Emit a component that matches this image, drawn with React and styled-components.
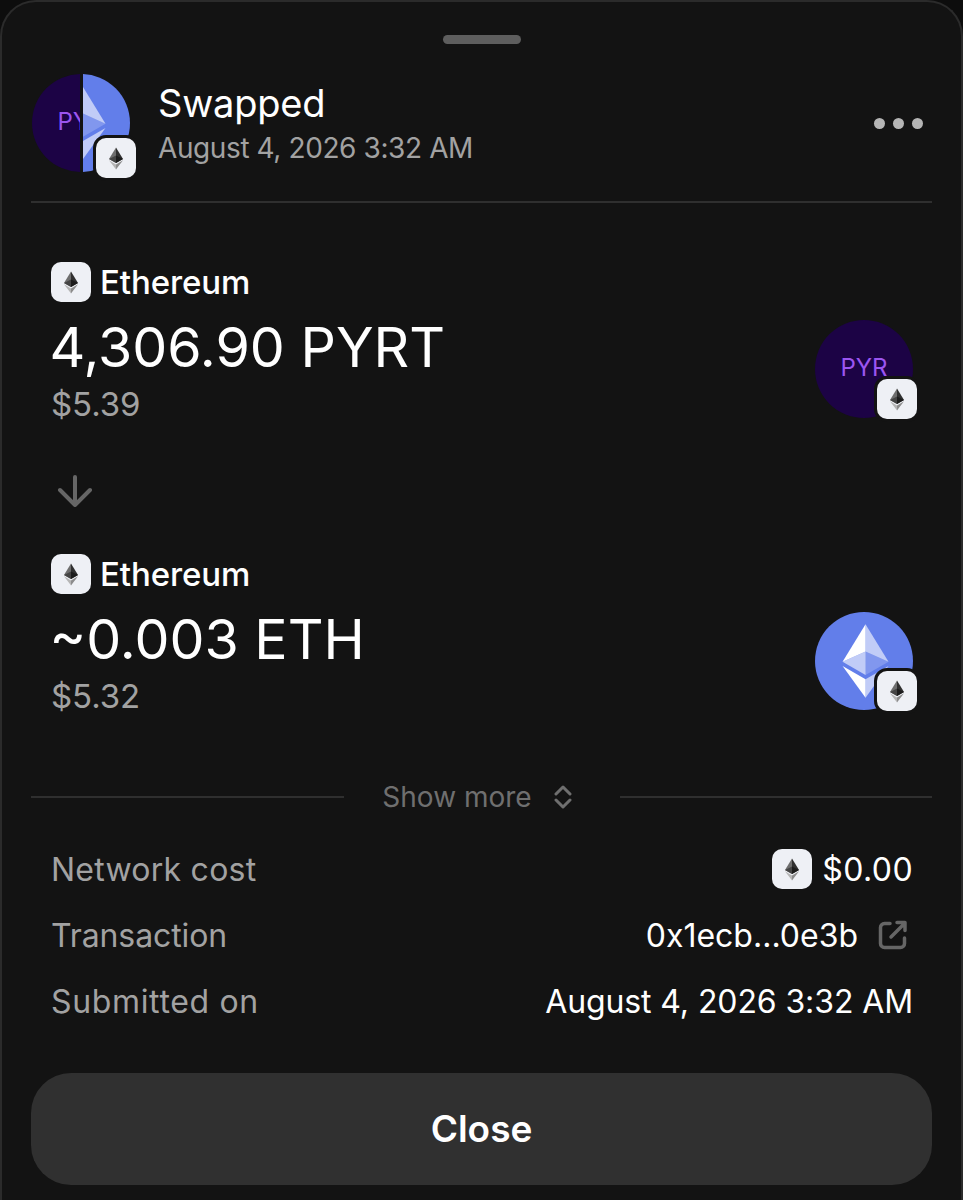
import React from "react";
import styled, { createGlobalStyle } from "styled-components";

const Global = createGlobalStyle`
  html, body { margin: 0; padding: 0; background: #0d0d0d; }
  * { box-sizing: border-box; }
  body { font-family: Inter, "Liberation Sans", sans-serif; -webkit-font-smoothing: antialiased; }
`;

const Sheet = styled.div`
  width: 963px;
  height: 1200px;
  overflow: hidden;
  background: #131313;
  border: 2px solid #2b2b2b;
  border-bottom: none;
  border-radius: 36px 36px 0 0;
  padding: 33px 29px 0;
  display: flex;
  flex-direction: column;
`;

const Handle = styled.div`
  width: 78px;
  height: 9px;
  border-radius: 5px;
  background: #5e5e5e;
  align-self: center;
`;

const Header = styled.header`
  margin-top: 30px;
  height: 129px;
  flex: none;
  display: flex;
  align-items: flex-start;
  border-bottom: 2px solid #2f2f2f;
`;

const LogoWrap = styled.div`
  position: relative;
  width: 98px;
  height: 98px;
  flex: none;
  margin-left: 1px;
`;

const HeaderText = styled.div`
  margin-left: 28px;
  flex: 1;
  display: flex;
  flex-direction: column;
`;

const Title = styled.div`
  margin-top: 7px;
  height: 44px;
  font-size: 38px;
  line-height: 44px;
  letter-spacing: -0.2px;
  color: #fff;
`;

const Subtitle = styled.div`
  margin-top: 5px;
  font-size: 28px;
  line-height: 36px;
  letter-spacing: -0.4px;
  color: #a2a2a2;
`;

const Dots = styled.div`
  display: flex;
  gap: 8px;
  margin: 44px 9px 0 0;
`;

const Dot = styled.span`
  width: 11px;
  height: 11px;
  border-radius: 50%;
  background: #b5b5b5;
`;

const SplitRow = styled.div`
  width: 98px;
  height: 98px;
  display: flex;
  gap: 3px;
`;

const HalfClip = styled.div`
  width: ${(p) => p.$w}px;
  height: 98px;
  overflow: hidden;
  flex: none;
`;

const ShiftedToken = styled.div`
  margin-left: ${(p) => p.$shift || 0}px;
  width: 98px;
`;

const PyrCircle = styled.div`
  width: 98px;
  height: 98px;
  border-radius: 50%;
  background: #1c0345;
  color: #9b55f0;
  font-size: 24px;
  padding-bottom: 3px;
  display: flex;
  align-items: center;
  justify-content: center;
  flex: none;
`;

const Badge = styled.div`
  position: absolute;
  right: ${(p) => p.$right}px;
  bottom: ${(p) => p.$bottom}px;
  width: 46px;
  height: 46px;
  border-radius: 13px;
  border: 3px solid #131313;
  background: #131313;
`;

const Chip = styled.div`
  width: 40px;
  height: 40px;
  border-radius: 10px;
  background: #eef0f5;
  display: flex;
  align-items: center;
  justify-content: center;
  flex: none;
`;

const Swap = styled.section`
  padding: 59px 20px 0;
  display: flex;
  flex-direction: column;
  flex: none;
`;

const TokenRow = styled.div`
  display: flex;
  justify-content: space-between;
  align-items: flex-end;
`;

const TokenInfo = styled.div`
  display: flex;
  flex-direction: column;
`;

const ChainRow = styled.div`
  display: flex;
  align-items: center;
  gap: 9px;
  height: 40px;
  font-size: 33px;
  font-weight: 500;
  letter-spacing: -0.1px;
  color: #fff;
`;

const Amount = styled.div`
  margin: 13px 0 0 -1.5px;
  font-size: 55.5px;
  line-height: 64px;
  color: #fff;
`;

const Fiat = styled.div`
  margin-top: 7px;
  font-size: 33px;
  line-height: 36px;
  letter-spacing: -0.1px;
  color: #a2a2a2;
`;

const TokenLogo = styled.div`
  position: relative;
  width: 98px;
  height: 98px;
  margin: 0 -1px 4px 0;
`;

const ArrowBox = styled.div`
  height: 132px;
  display: flex;
  align-items: center;
  padding: 6px 0 0 5px;
`;

const MoreRow = styled.div`
  margin-top: 63px;
  height: 40px;
  flex: none;
  display: flex;
  align-items: center;
`;

const Rule = styled.div`
  flex: 1;
  height: 2px;
  background: #2f2f2f;
`;

const MoreLabel = styled.div`
  width: 276px;
  padding-right: 9px;
  display: flex;
  align-items: center;
  justify-content: center;
  gap: 22px;
  color: #6f6f6f;
  font-size: 28px;
`;

const Details = styled.section`
  margin-top: 32px;
  padding: 0 19px 0 20px;
  display: flex;
  flex-direction: column;
  gap: 26px;
  flex: none;
`;

const DetailRow = styled.div`
  height: 40px;
  display: flex;
  justify-content: space-between;
  align-items: center;
  font-size: 32px;
`;

const DetailLabel = styled.span`
  color: #a2a2a2;
  letter-spacing: ${(p) => p.$track || 0}px;
`;

const DetailValue = styled.span`
  color: #fff;
  display: flex;
  align-items: center;
  gap: ${(p) => p.$gap || 10}px;
  letter-spacing: ${(p) => p.$track || 0}px;
`;

const CloseButton = styled.button`
  margin-top: 52px;
  width: 901px;
  height: 112px;
  flex: none;
  border: none;
  border-radius: 40px;
  padding: 0 0 2px;
  background: #303030;
  color: #fff;
  font: 600 37px Inter, "Liberation Sans", sans-serif;
`;

const IconEnd = styled.span`
  display: flex;
  margin-right: 5px;
`;

/* Full-colour Ethereum token mark on its blue disc */
const EthToken = () => (
  <svg width="98" height="98" viewBox="0 0 32 32" style={{ display: "block" }}>
    <circle cx="16" cy="16" r="16" fill="#627eea" />
    <path fill="#fff" fillOpacity=".602" d="M16.5 4v8.87l7.5 3.35z" />
    <path fill="#fff" d="M16.5 4 9 16.22l7.5-3.35z" />
    <path fill="#fff" fillOpacity=".602" d="M16.5 21.97V28L24 17.62z" />
    <path fill="#fff" d="M16.5 21.97V28L9 17.62z" />
    <path fill="#fff" fillOpacity=".2" d="m16.5 20.57 7.5-4.35-7.5-3.35z" />
    <path fill="#fff" fillOpacity=".602" d="m9 16.22 7.5 4.35v-7.7z" />
  </svg>
);

/* Monochrome Ethereum glyph used for the network chips */
const EthGlyph = () => (
  <svg width="14" height="23" viewBox="0 0 16 25">
    <path fill="#6e6e6e" d="M8 0 0 13l8 4.7z" />
    <path fill="#303030" d="m8 0 8 13-8 4.7z" />
    <path fill="#1c1c1c" d="m8 9 8 4-8 4.7z" />
    <path fill="#444" d="M8 9 0 13l8 4.7z" />
    <path fill="#b5b5b5" d="M0 14.6 8 25v-5.7z" />
    <path fill="#8c8c8c" d="m16 14.6-8 10.4v-5.7z" />
  </svg>
);

const NetworkChip = () => (
  <Chip>
    <EthGlyph />
  </Chip>
);

const ArrowDown = () => (
  <svg width="38" height="32" viewBox="0 0 38 32" fill="none" stroke="#666" strokeWidth="4" strokeLinecap="round" strokeLinejoin="round">
    <path d="M19 2v28M4 15l15 15 15-15" />
  </svg>
);

const Chevrons = () => (
  <svg width="18" height="24" viewBox="0 0 18 24" fill="none" stroke="#6f6f6f" strokeWidth="3" strokeLinecap="round" strokeLinejoin="round">
    <path d="m2 9 7-7 7 7M2 15l7 7 7-7" />
  </svg>
);

const ExternalLink = () => (
  <svg width="30" height="30" viewBox="0 0 30 30" fill="none" stroke="#666" strokeWidth="3.5" strokeLinecap="round" strokeLinejoin="round">
    <path d="M12 3.5H6.5a4 4 0 0 0-4 4v16a4 4 0 0 0 4 4h16a4 4 0 0 0 4-4V18M13 17 27 3M19 2.500h8v8" />
  </svg>
);

const TokenSide = ({ children }) => (
  <TokenLogo>
    {children}
    <Badge $right={-7} $bottom={-4}>
      <NetworkChip />
    </Badge>
  </TokenLogo>
);

export default function App() {
  return (
    <>
      <Global />
      <Sheet>
        <Handle />
        <Header>
          <LogoWrap>
            <SplitRow>
              <HalfClip $w={48}>
                <PyrCircle>PYR</PyrCircle>
              </HalfClip>
              <HalfClip $w={47}>
                <ShiftedToken $shift={-51}>
                  <EthToken />
                </ShiftedToken>
              </HalfClip>
            </SplitRow>
            <Badge $right={-9} $bottom={-9}>
              <NetworkChip />
            </Badge>
          </LogoWrap>
          <HeaderText>
            <Title>Swapped</Title>
            <Subtitle>August 4, 2026 3:32 AM</Subtitle>
          </HeaderText>
          <Dots>
            <Dot />
            <Dot />
            <Dot />
          </Dots>
        </Header>

        <Swap>
          <TokenRow>
            <TokenInfo>
              <ChainRow>
                <NetworkChip />
                Ethereum
              </ChainRow>
              <Amount>4,306.90 PYRT</Amount>
              <Fiat>$5.39</Fiat>
            </TokenInfo>
            <TokenSide>
              <PyrCircle>PYR</PyrCircle>
            </TokenSide>
          </TokenRow>
          <ArrowBox>
            <ArrowDown />
          </ArrowBox>
          <TokenRow>
            <TokenInfo>
              <ChainRow>
                <NetworkChip />
                Ethereum
              </ChainRow>
              <Amount>~0.003 ETH</Amount>
              <Fiat>$5.32</Fiat>
            </TokenInfo>
            <TokenSide>
              <EthToken />
            </TokenSide>
          </TokenRow>
        </Swap>

        <MoreRow>
          <Rule />
          <MoreLabel>
            Show more
            <Chevrons />
          </MoreLabel>
          <Rule />
        </MoreRow>

        <Details>
          <DetailRow>
            <DetailLabel $track={0.25}>Network cost</DetailLabel>
            <DetailValue $track={0.4}>
              <NetworkChip />
              $0.00
            </DetailValue>
          </DetailRow>
          <DetailRow>
            <DetailLabel $track={-0.1}>Transaction</DetailLabel>
            <DetailValue $gap={20}>
              0x1ecb...0e3b
              <IconEnd>
                <ExternalLink />
              </IconEnd>
            </DetailValue>
          </DetailRow>
          <DetailRow>
            <DetailLabel $track={0.65}>Submitted on</DetailLabel>
            <DetailValue $track={-0.1}>August 4, 2026 3:32 AM</DetailValue>
          </DetailRow>
        </Details>

        <CloseButton>Close</CloseButton>
      </Sheet>
    </>
  );
}
